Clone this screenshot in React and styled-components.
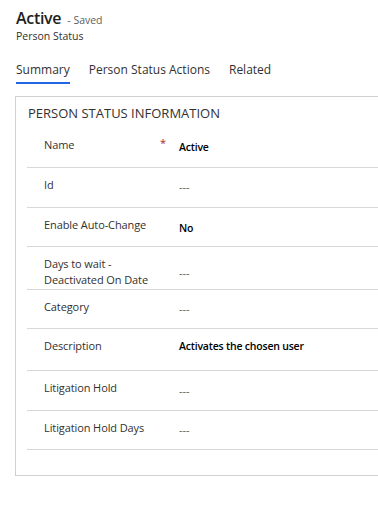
import React from 'react';
import styled, { createGlobalStyle } from 'styled-components';

const GlobalStyle = createGlobalStyle`
  body {
    margin: 0;
    background: #fff;
    font-family: "Open Sans", "Noto Sans", sans-serif;
    color: #323130;
    overflow: hidden;
  }
`;

const Page = styled.div`
  width: 378px;
  height: 510px;
  overflow: hidden;
  padding-top: 8px;
  box-sizing: border-box;
`;

const Header = styled.div`
  padding-left: 16px;
`;

const TitleLine = styled.div`
  display: flex;
  align-items: baseline;
  gap: 6px;
`;

const Title = styled.span`
  font-size: 16px;
  font-weight: 600;
  letter-spacing: -0.3px;
  color: #201f1e;
  line-height: 20px;
`;

const SavedNote = styled.span`
  font-size: 10.5px;
  color: #605e5c;
`;

const EntityName = styled.div`
  font-size: 10.5px;
  line-height: 14px;
  color: #323130;
  margin-top: 1px;
`;

const Tabs = styled.div`
  display: flex;
  gap: 19px;
  padding-left: 16px;
  margin-top: 18px;
`;

const Tab = styled.div`
  font-size: 12px;
  line-height: 18px;
  color: #323130;
  padding-bottom: 3px;
  border-bottom: 2px solid ${(p) => (p.active ? '#2266e3' : 'transparent')};
`;

const Card = styled.section`
  margin: 12px 0 0 15px;
  width: 400px;
  height: 380px;
  box-sizing: border-box;
  border: 1px solid #d2d0ce;
  padding: 0 0 0 11px;
`;

const SectionTitle = styled.h2`
  margin: 0;
  padding: 6px 0 0 1px;
  font-size: 13px;
  font-weight: 400;
  line-height: 20px;
  color: #323130;
  height: 25px;
`;

const Row = styled.div`
  display: grid;
  grid-template-columns: 116px 19px 1fr;
  padding: 9px 0 0 17px;
  height: ${(p) => p.h}px;
  box-sizing: border-box;
  border-bottom: 1px solid #d8d8d8;
`;

const Label = styled.div`
  font-size: 11px;
  line-height: 16px;
  letter-spacing: -0.1px;
  color: #323130;
`;

const Required = styled.div`
  color: #a4262c;
  font-size: 11px;
  line-height: 12px;
`;

const Value = styled.div`
  font-size: ${(p) => (p.strong ? 10.5 : 11)}px;
  line-height: 16px;
  letter-spacing: ${(p) => (p.strong ? -0.2 : 0)}px;
  padding-top: ${(p) => p.offset}px;
  color: ${(p) => (p.empty ? '#605e5c' : '#000')};
  font-weight: ${(p) => (p.strong ? 600 : 400)};
`;

const fields = [
  { label: 'Name', value: 'Active', strong: true, required: true, h: 40, offset: 2 },
  { label: 'Id', h: 40, offset: 2 },
  { label: 'Enable Auto-Change', value: 'No', strong: true, h: 39, offset: 3 },
  { label: 'Days to wait - Deactivated On Date', h: 43, offset: 9 },
  { label: 'Category', h: 39, offset: 2 },
  { label: 'Description', value: 'Activates the chosen user', strong: true, h: 42, offset: 0 },
  { label: 'Litigation Hold', h: 40, offset: 3 },
  { label: 'Litigation Hold Days', h: 39, offset: 2 },
];

const App = () => (
  <Page>
    <GlobalStyle />
    <Header>
      <TitleLine>
        <Title>Active</Title>
        <SavedNote>- Saved</SavedNote>
      </TitleLine>
      <EntityName>Person Status</EntityName>
    </Header>
    <Tabs>
      <Tab active>Summary</Tab>
      <Tab>Person Status Actions</Tab>
      <Tab>Related</Tab>
    </Tabs>
    <Card>
      <SectionTitle>PERSON STATUS INFORMATION</SectionTitle>
      {fields.map((f) => (
        <Row key={f.label} h={f.h}>
          <Label>{f.label}</Label>
          <Required>{f.required ? '*' : ''}</Required>
          <Value empty={!f.value} strong={f.strong} offset={f.offset}>
            {f.value || '---'}
          </Value>
        </Row>
      ))}
    </Card>
  </Page>
);

export default App;
